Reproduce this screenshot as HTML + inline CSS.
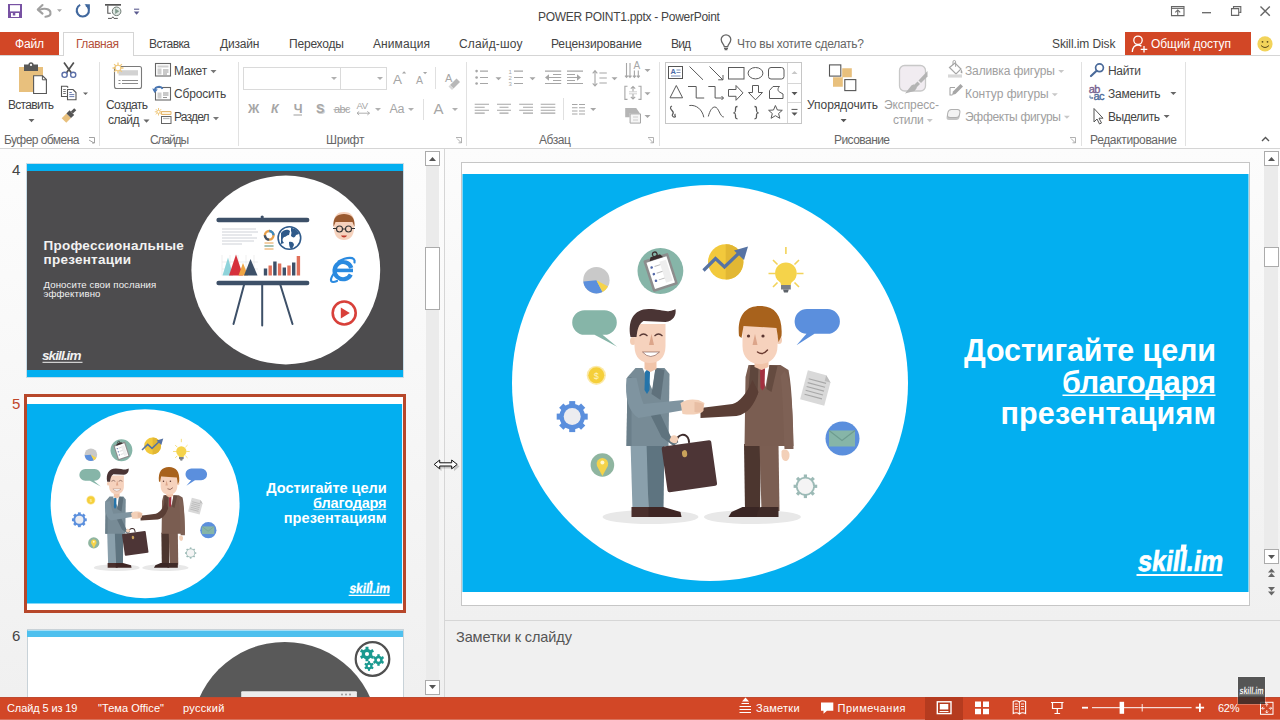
<!DOCTYPE html>
<html><head><meta charset="utf-8">
<style>
*{margin:0;padding:0;box-sizing:border-box}
html,body{width:1280px;height:720px;overflow:hidden;background:#fff;font-family:"Liberation Sans",sans-serif;color:#444}
.a{position:absolute}
.t{position:absolute;white-space:nowrap;line-height:1}
svg{position:absolute;overflow:visible}
.tab{position:absolute;top:37px;font-size:12px;color:#444;white-space:nowrap;line-height:14px;letter-spacing:-0.25px}
.rl{position:absolute;font-size:12px;color:#444;white-space:nowrap;line-height:14px;letter-spacing:-0.1px}
.gl{position:absolute;top:133px;font-size:12px;color:#666;white-space:nowrap;line-height:14px;letter-spacing:-0.1px}
.sep{position:absolute;top:62px;width:1px;height:84px;background:#e1e1e1}
.dd{position:absolute;width:0;height:0;border-left:3px solid transparent;border-right:3px solid transparent;border-top:3px solid #777}
</style></head><body>

<!-- ===== TITLE BAR ===== -->
<svg style="left:0;top:0" width="160" height="30">
 <path d="M8 4h14v14H8z" fill="#7852a3"/>
 <path d="M10 5.2h10v6.2H10z" fill="#fff"/>
 <path d="M11 13h8v4h-8z" fill="#fff"/>
 <path d="M12.8 13h2.5v2.5h-2.5z" fill="#7852a3"/>
 <path d="M40 9.6 C44 8 50 8.5 50.5 12.5 C51 15.5 48.5 16.5 45.5 16.8" fill="none" stroke="#a0a0a0" stroke-width="2.1" stroke-linecap="round"/>
 <path d="M42.5 5 L37.8 9.6 L42.5 13.6" fill="none" stroke="#a0a0a0" stroke-width="2.1" stroke-linecap="round" stroke-linejoin="round"/>
 <path d="M57 9.3h5l-2.5 2.6z" fill="#a8a8a8"/>
 <path d="M86 5.2 A6.1 6.1 0 1 1 80.2 4.9" fill="none" stroke="#41689e" stroke-width="2.1"/>
 <path d="M84.5 4.3h5.4v5.4z" fill="#41689e"/>
 <path d="M105 4h16v1.7h-16z" fill="#555"/>
 <path d="M107.8 5.6v7.6h3" fill="none" stroke="#555" stroke-width="1.1"/>
 <circle cx="116.6" cy="11.3" r="4.3" fill="#dfe7e3" stroke="#6e7a74" stroke-width="1"/>
 <path d="M115.2 8.6v5.4l4-2.7z" fill="#7f9a8c"/>
 <path d="M108 18.4h3.6l1.2-1.6 1.2 1.6h3.8" fill="none" stroke="#555" stroke-width="1"/>
 <path d="M134 9.2h5.2" stroke="#5b5b8f" stroke-width="1.1"/>
 <path d="M133.8 11.4h5.6l-2.8 3.3z" fill="#5b5b8f"/>
</svg>
<svg style="left:1160px;top:0" width="120" height="30">
 <path d="M11.5 6.6h12.5v9H11.5z" fill="none" stroke="#666" stroke-width="1.1"/>
 <path d="M11.5 8.4h12.5" stroke="#666" stroke-width="1"/>
 <path d="M17.75 15.5v-5.6M15.3 12.3l2.45-2.4 2.45 2.4" fill="none" stroke="#666" stroke-width="1.1"/>
 <path d="M42 12.7h9" stroke="#666" stroke-width="1.3"/>
 <path d="M73.5 8V6.6h7.3v5.8h-1.6" fill="none" stroke="#666" stroke-width="1.1"/>
 <path d="M71.5 8.6h7.2v6.8h-7.2z" fill="none" stroke="#666" stroke-width="1.1"/>
 <path d="M100.5 6.5l9.3 9.3M109.8 6.5l-9.3 9.3" stroke="#666" stroke-width="1.4"/>
</svg>
<div class="t" style="left:538px;top:11px;font-size:12px;color:#444;letter-spacing:-0.28px">POWER POINT1.pptx - PowerPoint</div>

<!-- ===== TABS ===== -->
<div class="a" style="left:0;top:55px;width:1280px;height:1px;background:#d5d5d5"></div>
<div class="a" style="left:0;top:32px;width:59px;height:23px;background:#d24726"></div>
<div class="tab" style="left:15px;color:#fff;letter-spacing:-0.17px">Файл</div>
<div class="a" style="left:63px;top:32px;width:71px;height:24px;background:#fff;border:1px solid #d5d5d5;border-bottom:none"></div>
<div class="tab" style="left:76px;color:#b4503a;letter-spacing:-0.45px">Главная</div>
<div class="tab" style="left:149px;letter-spacing:-0.60px">Вставка</div>
<div class="tab" style="left:220px;letter-spacing:-0.17px">Дизайн</div>
<div class="tab" style="left:289px;letter-spacing:-0.19px">Переходы</div>
<div class="tab" style="left:373px;letter-spacing:0.09px">Анимация</div>
<div class="tab" style="left:459px;letter-spacing:0.16px">Слайд-шоу</div>
<div class="tab" style="left:551px;letter-spacing:-0.13px">Рецензирование</div>
<div class="tab" style="left:671px;letter-spacing:-0.86px">Вид</div>
<div class="tab" style="left:737px;color:#666;letter-spacing:-0.27px">Что вы хотите сделать?</div>
<svg style="left:715px;top:30px" width="30" height="26">
 <path d="M9.3 16.6 C8.8 14 6.2 12.6 6.2 9.6 A4.8 4.8 0 0 1 15.8 9.6 C15.8 12.6 13.2 14 12.7 16.6z" fill="none" stroke="#666" stroke-width="1.3"/>
 <path d="M9 18.3h4M9.6 19.7h2.8" stroke="#666" stroke-width="1.2"/>
</svg>
<div class="tab" style="left:1052px;letter-spacing:-0.10px">Skill.im Disk</div>
<div class="a" style="left:1125px;top:32px;width:126px;height:23px;background:#d24726"></div>
<div class="tab" style="left:1151px;color:#fff;letter-spacing:-0.06px">Общий доступ</div>
<svg style="left:1125px;top:32px" width="155" height="23">
 <circle cx="13" cy="8.3" r="4.2" fill="none" stroke="#fff" stroke-width="1.3"/>
 <path d="M7.3 20 C7.6 15.5 10 13 13 13 C14.5 13 15.6 13.5 16.4 14.3" fill="none" stroke="#fff" stroke-width="1.3"/>
 <path d="M19 14v6.6M15.7 17.3h6.6" stroke="#fff" stroke-width="1.3"/>
 <circle cx="140" cy="11.9" r="7.6" fill="#f2d35a"/>
 <circle cx="137.5" cy="9.8" r="0.9" fill="#5a4a1a"/>
 <circle cx="142.5" cy="9.8" r="0.9" fill="#5a4a1a"/>
 <path d="M136 13.5 Q140 17.5 144 13.5" fill="none" stroke="#5a4a1a" stroke-width="1"/>
</svg>

<!-- ===== RIBBON ===== -->
<div class="a" style="left:0;top:148px;width:1280px;height:1px;background:#d5d5d5"></div>
<div class="sep" style="left:99px"></div>
<div class="sep" style="left:238px"></div>
<div class="sep" style="left:466px"></div>
<div class="sep" style="left:659px"></div>
<div class="sep" style="left:1081px"></div>
<div class="sep" style="left:1185px"></div>
<!-- clipboard group -->
<svg style="left:0;top:56px" width="100" height="92">
 <path d="M19 11h24v25H19z" fill="#e8c07d"/>
 <path d="M24 8.5h14v6.5H24z" fill="#575757"/>
 <circle cx="31" cy="8.8" r="2.6" fill="#575757"/>
 <circle cx="31" cy="8.9" r="1.1" fill="#fff"/>
 <path d="M33.6 19.8h9l3.8 3.8v13.9H33.6z" fill="#fff" stroke="#575757" stroke-width="1.1"/>
 <path d="M42.4 19.8v4h4" fill="none" stroke="#575757" stroke-width="1"/>
 <path d="M28.5 63h6l-3 3.2z" fill="#666"/>
 <path d="M64 6.5l8.5 12M73.8 6.5l-8.5 12" stroke="#505050" stroke-width="1.7"/>
 <circle cx="64.6" cy="18.8" r="2.6" fill="#fff" stroke="#5b6fa8" stroke-width="1.4"/>
 <circle cx="73.2" cy="18.8" r="2.6" fill="#fff" stroke="#5b6fa8" stroke-width="1.4"/>
 <path d="M67.5 40.5h-6v-10.2h5.5l1.2 1.2" fill="#fff" stroke="#555" stroke-width="1.1"/>
 <path d="M63.2 33.5h2.6M63.2 35.5h2.6M63.2 37.5h2.6" stroke="#666" stroke-width="0.9"/>
 <path d="M67.5 33.5h5.5l3 3v7.3h-8.5z" fill="#fff" stroke="#555" stroke-width="1.1"/>
 <path d="M69.3 36.5h2.5M69.3 38.6h5M69.3 40.6h5" stroke="#5b6fa8" stroke-width="0.9"/>
 <path d="M83 36.4h5l-2.5 2.6z" fill="#666"/>
 <g transform="translate(70 58.5) rotate(-45) scale(0.9)">
  <rect x="-9.5" y="-3.6" width="7.5" height="7.2" fill="#e8c07d"/>
  <rect x="-2" y="-3.6" width="5" height="7.2" fill="#555"/>
  <rect x="3" y="-1.6" width="5.2" height="3.2" fill="#555"/>
 </g>
 <path d="M89 81.5h5.5v5.5M89 84l5 3M92 87h2.5" fill="none" stroke="#999" stroke-width="0.9"/>
</svg>
<div class="rl" style="left:8px;top:98px;letter-spacing:-0.70px">Вставить</div>
<div class="gl" style="left:4px;letter-spacing:-0.56px">Буфер обмена</div>
<!-- slides group -->
<svg style="left:100px;top:56px" width="140" height="92">
 <rect x="14.5" y="10.5" width="27" height="22" rx="2" fill="#fff" stroke="#7a7a7a" stroke-width="1.1"/>
 <path d="M18.6 14.2h19.4v5.3H18.6z" fill="#d2d2d2"/>
 <path d="M18.5 24.5h2M22 24.5h16M18.5 27.5h2M22 27.5h16" stroke="#8a8a8a" stroke-width="1"/>
 <g stroke="#f0c97e" stroke-width="1.3"><path d="M18 6.5v11M12.5 12h11M14.1 8.1l7.8 7.8M21.9 8.1l-7.8 7.8"/></g>
 <circle cx="18" cy="12" r="2.8" fill="#fff" stroke="#f0c97e" stroke-width="1.1"/>
 <path d="M43.5 63.5h6l-3 3.2z" fill="#666"/>
 <rect x="55.5" y="7.5" width="15" height="12.5" fill="#fff" stroke="#666" stroke-width="1.1"/>
 <path d="M57.5 9.5h11v2h-11z" fill="#cfcfcf"/>
 <path d="M57.5 12.5h4v6h-4z" fill="#cfcfcf"/>
 <path d="M63 14h5.5M63 16h5.5M63 18h4" stroke="#888" stroke-width="0.9"/>
 <rect x="55.5" y="31.5" width="15" height="12.5" fill="#fff" stroke="#666" stroke-width="1.1"/>
 <path d="M57.5 36.5h4v6h-4z" fill="#cfcfcf"/>
 <path d="M63 37h5.5M63 39h5.5M63 41.5h4" stroke="#888" stroke-width="0.9"/>
 <path d="M54.5 35 C55 30 61 29.5 62.5 33" fill="none" stroke="#4a78b6" stroke-width="1.8"/>
 <path d="M52.2 32.5l2.4 4.4 3.2-3.5z" fill="#4a78b6"/>
 <g stroke="#f0c97e" stroke-width="1"><path d="M58.5 52v7.5M54.8 55.8h7.5M55.9 53.2l5.2 5.2M61.1 53.2l-5.2 5.2"/></g>
 <circle cx="58.5" cy="55.8" r="1.6" fill="#fff" stroke="#f0c97e"/>
 <path d="M61.5 55.5h9.5v3H61.5z" fill="#fdf3e0" stroke="#e6b870" stroke-width="1"/>
 <rect x="61.5" y="60.5" width="9.5" height="7" fill="#fff" stroke="#666" stroke-width="1"/>
 <path d="M63 62.5h6.5" stroke="#bbb" stroke-width="1.3"/>
 <path d="M110.5 14h6l-3 3.2z" fill="#777"/>
 <path d="M113 61h6l-3 3.2z" fill="#777"/>
</svg>
<div class="rl" style="left:106px;top:98px;letter-spacing:-0.60px">Создать</div>
<div class="rl" style="left:108px;top:113px;letter-spacing:-0.50px">слайд</div>
<div class="rl" style="left:174px;top:64px;letter-spacing:-0.19px">Макет</div>
<div class="rl" style="left:174px;top:87px;letter-spacing:-0.16px">Сбросить</div>
<div class="rl" style="left:174px;top:110px;letter-spacing:-0.81px">Раздел</div>
<div class="gl" style="left:150px;letter-spacing:-1.13px">Слайды</div>
<div class="gl" style="left:326px;letter-spacing:-0.27px">Шрифт</div>
<!-- font group -->
<div class="a" style="left:243px;top:67px;width:144px;height:23px;border:1px solid #dadada;background:#fff"></div>
<div class="a" style="left:340px;top:67px;width:1px;height:23px;background:#dadada"></div>
<div class="dd" style="left:331px;top:77px;border-top-color:#b0b0b0"></div>
<div class="dd" style="left:377px;top:77px;border-top-color:#b0b0b0"></div>
<div class="a" style="left:435px;top:67px;width:1px;height:22px;background:#e0e0e0"></div>
<div class="a" style="left:423px;top:99px;width:1px;height:21px;background:#e0e0e0"></div>
<svg style="left:240px;top:62px" width="230" height="62">
 <g fill="#a6a6a6">
  <text x="153" y="22" font-family="Liberation Sans" font-size="13.5">A</text>
  <path d="M162 11.5h4.2l-2.1-2.3z"/>
  <text x="176" y="22" font-family="Liberation Sans" font-size="10.5">A</text>
  <path d="M183 10h4.2l-2.1 2.3z"/>
  <text x="8" y="51.2" font-family="Liberation Sans" font-size="12.5" font-weight="700">Ж</text>
  <text x="31" y="51.2" font-family="Liberation Sans" font-size="12.5" font-weight="700" font-style="italic">К</text>
  <text x="53.8" y="51.2" font-family="Liberation Sans" font-size="12.5" font-weight="700">Ч</text>
  <text x="77" y="52.2" font-family="Liberation Sans" font-size="12.5" font-weight="700" fill="#d0d0d0">S</text>
  <text x="76" y="51.2" font-family="Liberation Sans" font-size="12.5" font-weight="700">S</text>
  <text x="94" y="51.2" font-family="Liberation Sans" font-size="11" letter-spacing="-0.6">abc</text>
  <text x="116.5" y="46.5" font-family="Liberation Sans" font-size="9.5" letter-spacing="-0.4">AV</text>
  <text x="149.5" y="51.2" font-family="Liberation Sans" font-size="12.5" letter-spacing="-0.3">Aa</text>
  <text x="193.6" y="52" font-family="Liberation Sans" font-size="15">A</text>
 </g>
 <path d="M53.5 53h8.5" stroke="#a6a6a6" stroke-width="1.1"/>
 <path d="M93.5 47.6h16" stroke="#a6a6a6" stroke-width="0.9"/>
 <path d="M117 51.2h12.5M117 51.2l2.2-1.8M117 51.2l2.2 1.8M129.5 51.2l-2.2-1.8M129.5 51.2l-2.2 1.8" stroke="#a6a6a6" stroke-width="0.9" fill="none"/>
 <g transform="translate(205,9)">
  <text x="0" y="11" font-family="Liberation Sans" font-size="11" fill="#a6a6a6">A</text>
  <path d="M5 14 L11.5 7.5 L15 11 L8.5 17.5z" fill="#b8b8b8"/>
  <path d="M8.5 17.5 L5 14 L3.5 15.5 L7 19z" fill="#d8d8d8"/>
 </g>
</svg>
<div class="dd" style="left:375px;top:108px;border-top-color:#b0b0b0"></div>
<div class="dd" style="left:408px;top:108px;border-top-color:#b0b0b0"></div>
<div class="dd" style="left:452px;top:108px;border-top-color:#b0b0b0"></div>
<div class="gl" style="left:539px;letter-spacing:-0.42px">Абзац</div>
<!-- paragraph group -->
<div class="a" style="left:563px;top:98px;width:1px;height:22px;background:#e0e0e0"></div>
<svg style="left:468px;top:60px" width="192" height="70">
 <g fill="#a6a6a6">
  <circle cx="8.6" cy="11.1" r="1.3"/><circle cx="8.6" cy="17.5" r="1.3"/><circle cx="8.6" cy="23.5" r="1.3"/>
  <text x="40.5" y="14" font-family="Liberation Sans" font-size="6">1</text>
  <text x="40.5" y="20" font-family="Liberation Sans" font-size="6">2</text>
  <text x="40.5" y="26" font-family="Liberation Sans" font-size="6">3</text>
  <path d="M27.5 17.2h6l-3 3z"/><path d="M61.5 17.2h6l-3 3z"/><path d="M143.5 17.2h6l-3 3z"/>
  <path d="M176.5 9h6l-3 3z"/><path d="M176.5 32.2h6l-3 3z"/><path d="M176.5 55h6l-3 3z"/>
  <path d="M122.2 48h6l-3 3z"/>
  <path d="M77 17.5l4-3.2v6.4z"/><path d="M113 17.5l-4-3.2v6.4z"/>
  <path d="M157 74" />
 </g>
 <g stroke="#a6a6a6" stroke-width="1.1" fill="none">
  <path d="M12 11.1h8M12 17.5h8M12 23.5h8"/>
  <path d="M46 11.1h9M46 17.5h9M46 23.5h9"/>
  <path d="M77 11.1h16.2M85 14.5h8.2M81 17.5h12.2M85 20.5h8.2M77 23.5h16.2"/>
  <path d="M99 11.1h16M99 14.5h8M99 17.5h10M99 20.5h8M99 23.5h16"/>
  <path d="M127 11.5v14M124.7 13.3l2.3-2.6 2.3 2.6M124.7 23.4l2.3 2.6 2.3-2.6"/>
  <path d="M131.4 13h7.4M131.4 18h7.4M131.4 23h7.4"/>
  <path d="M158.5 3v14M162 3v14M166.4 10.5v6.5M170.3 10.5v6.5M157 15.6l1.5 1.8 1.5-1.8M160.5 15.6l1.5 1.8 1.5-1.8M164.9 15.6l1.5 1.8 1.5-1.8M168.8 15.6l1.5 1.8 1.5-1.8"/>
  <path d="M159.5 26.2h-2.6v13.2h2.6M170.4 26.2h2.6v13.2h-2.6"/>
  <path d="M165 26.5v5M162.8 28.7l2.2-2.2 2.2 2.2M165 34v5M162.8 36.8l2.2 2.2 2.2-2.2"/>
  <path d="M6.7 44.2h14.3M6.7 47.2h10M6.7 50.2h14.3M6.7 53.1h10"/>
  <path d="M29 44.2h14M31.5 47.2h9M29 50.2h14M31.5 53.1h9"/>
  <path d="M51.2 44.2h13.8M55 47.2h10M51.2 50.2h13.8M55 53.1h10"/>
  <path d="M72.7 44.2h14.6M72.7 47.2h14.6M72.7 50.2h14.6M72.7 53.1h14.6"/>
  <path d="M104 44.5h5.5M111 44.5h6M104 47.8h5.5M111 47.8h6M104 51h5.5M111 51h6M104 54h5.5M111 54h6"/>
 </g>
 <text x="165.6" y="9.4" font-family="Liberation Sans" font-size="10" fill="#a6a6a6">A</text>
 <path d="M157.2 48h11l3.8 5.4h-10.4v3.9h-4.4z" fill="#b5b5b5"/>
 <path d="M162.1 53.9h10.4v9.2h-10.4z" fill="#f6f6f6" stroke="#a6a6a6" stroke-width="1"/>
 <path d="M165 57h5M165 60h5M161 31.8h8M161 33.8h8" stroke="#c4c4c4" stroke-width="0.8"/>
</svg>
<div class="gl" style="left:834px;letter-spacing:-0.55px">Рисование</div>
<!-- drawing group -->
<div class="a" style="left:665px;top:62px;width:137px;height:62px;border:1px solid #c6c6c6;background:#fff"></div>
<div class="a" style="left:787px;top:63px;width:1px;height:60px;background:#d6d6d6"></div>
<div class="a" style="left:788px;top:83px;width:13px;height:1px;background:#d6d6d6"></div>
<div class="a" style="left:788px;top:102px;width:13px;height:1px;background:#d6d6d6"></div>
<svg style="left:660px;top:58px" width="200" height="70">
 <g fill="none" stroke="#5a5a5a" stroke-width="1">
  <rect x="8.5" y="8.5" width="14" height="12" stroke="#555"/>
  <path d="M16.5 12h4M16.5 14.5h4M11 18h9.5" stroke="#7a8fb8"/>
  <path d="M29.5 8.5l13.5 13.3"/>
  <path d="M49.5 8.5l13.3 13.3M63 17v4.8h-4.8"/>
  <rect x="68.5" y="9.5" width="15.5" height="11.5"/>
  <ellipse cx="95.5" cy="15.2" rx="7.4" ry="5.7"/>
  <rect x="108.5" y="9.5" width="15.5" height="11.5" rx="2.5"/>
  <path d="M16.3 27.5l-6.3 12.3h12.6z"/>
  <path d="M28 28.5h8.2v11.5h8"/>
  <path d="M48.3 28.5h6.8v11.5h8.3M61.5 38l2 2-2 2"/>
  <path d="M68.5 31.5h7.5v-4l7 7.4-7 7.4v-4h-7.5z"/>
  <path d="M92.5 27.5h6v7h4l-7 7.3-7-7.3h4z"/>
  <path d="M109.5 32.5l3.5-4h6.5c-2 1.5-2 4.5 0 5.5l3.5 2v4.5h-13.5z"/>
  <path d="M12 48c-2.5 1-1.5 3 0 4.5s1.5 3 .5 4 1 3 2.5 2.5-1.5-2 .5-3" stroke-width="1.2"/>
  <path d="M29.3 47.5c7-1 13 4 14.5 11.8"/>
  <path d="M48.3 58.5c1.5-6 4-9.5 6.5-9.5 4 0 5 10 9 10"/>
  <path d="M77.5 48.5c-2 0-2 1-2 3.5s-.5 2.5-2 2.8c1.5.3 2 .5 2 2.8s0 3.2 2 3.2" stroke-width="1.3"/>
  <path d="M94.5 48.5c2 0 2 1 2 3.5s.5 2.5 2 2.8c-1.5.3-2 .5-2 2.8s0 3.2-2 3.2" stroke-width="1.3"/>
  <path d="M115.4 47.5l2 4.5 4.9.3-3.7 3.2 1.2 4.8-4.4-2.6-4.3 2.6 1.2-4.8-3.7-3.2 4.9-.3z"/>
 </g>
 <text x="10.5" y="16" font-family="Liberation Sans" font-size="7.5" font-weight="700" fill="#4a6aa8">A</text>
 <path d="M131.5 16h6l-3-3z" fill="#c8c8c8"/>
 <path d="M131.5 34h6l-3 3.2z" fill="#555"/>
 <path d="M131.5 51.4h6" stroke="#555" stroke-width="1"/>
 <path d="M131.5 54.5h6l-3 3.2z" fill="#555"/>
 <!-- arrange -->
 <path d="M182.2 10.3h9.6v9h-9.6zM173 19.3h9.8v9.4H173z" fill="#e8c07d"/>
 <rect x="169.5" y="6.9" width="11.3" height="11.2" fill="#fff" stroke="#555" stroke-width="1.1"/>
 <rect x="184.8" y="21.6" width="11" height="11" fill="#fff" stroke="#555" stroke-width="1.1"/>
 <path d="M180.6 61h6l-3 3.2z" fill="#555"/>
</svg>
<div class="rl" style="left:807px;top:98px;letter-spacing:-0.04px">Упорядочить</div>
<svg style="left:880px;top:58px" width="200" height="70">
 <rect x="19.5" y="7.5" width="26" height="25.5" rx="5" fill="#f1ecf1" stroke="#c8c8c8" stroke-width="1.3"/>
 <path d="M25 35.5l6-7.5c1.5-2 4-2 5.5-.5l.5.5c0 2-1 3.5-2.5 5z" fill="#b4b4b4"/>
 <path d="M34.5 26.5l3-3 2.5 2.5-3 3z" fill="#b4b4b4"/>
 <path d="M38.5 22.5l9-9.5v5.5l-6.5 6.5z" fill="#b4b4b4"/>
 <path d="M46.8 61h6l-3 3.2z" fill="#c8c8c8"/>
 <!-- fill -->
 <path d="M69.5 9.5l5.5-4.5 6 6-5 5z" fill="#fff" stroke="#a6a6a6" stroke-width="1.2"/>
 <path d="M73 7v-3.2a1.3 1.3 0 0 1 2.6 0v5" fill="none" stroke="#a6a6a6" stroke-width="1"/>
 <path d="M81 11.5c1.2.8 1.8 2.5 1.2 4l-1.6-.8z" fill="#a6a6a6"/>
 <path d="M68 16.4h14v3.2H68z" fill="#d8d8d8"/>
 <!-- outline -->
 <path d="M70 29.5v7.5h2.5M70 29.5h5" fill="none" stroke="#a6a6a6" stroke-width="1.1"/>
 <path d="M72 37l1-3.5 7.5-7.5 2.5 2.5-7.5 7.5z" fill="#a6a6a6"/>
 <!-- effects -->
 <rect x="67" y="54" width="13" height="8" rx="3" fill="#c4c4c4" transform="skewX(-10) translate(10 0)"/>
 <rect x="67.5" y="51.5" width="12" height="8" rx="3" fill="#f3f3f3" stroke="#b0b0b0" stroke-width="1" transform="skewX(-10) translate(10 0)"/>
 <path d="M178.2 12h6l-3 3z" fill="#c8c8c8"/>
 <path d="M171.8 35.3h6l-3 3z" fill="#c8c8c8"/>
 <path d="M183.9 57.8h6l-3 3z" fill="#c8c8c8"/>
</svg>
<div class="rl" style="left:884px;top:98px;color:#a0a0a0;letter-spacing:-0.11px">Экспресс-</div>
<div class="rl" style="left:893px;top:113px;color:#a0a0a0;letter-spacing:-0.33px">стили</div>
<div class="rl" style="left:965px;top:64px;color:#a0a0a0;letter-spacing:-0.13px">Заливка фигуры</div>
<div class="rl" style="left:965px;top:87px;color:#a0a0a0;letter-spacing:-0.02px">Контур фигуры</div>
<div class="rl" style="left:965px;top:110px;color:#a0a0a0;letter-spacing:-0.31px">Эффекты фигуры</div>
<!-- editing group -->
<svg style="left:1080px;top:58px" width="200" height="90">
 <circle cx="19.5" cy="9.8" r="3.9" fill="none" stroke="#4a6a9a" stroke-width="1.7"/>
 <path d="M16.6 12.7l-5.6 5.3" stroke="#4a6a9a" stroke-width="2.2" stroke-linecap="round"/>
 <text x="8.8" y="34.6" font-family="Liberation Sans" font-size="11" fill="#76608e" stroke="#76608e" stroke-width="0.35" letter-spacing="-0.6">ab</text>
 <text x="13.6" y="41.9" font-family="Liberation Sans" font-size="11" fill="#4a6a9a" stroke="#4a6a9a" stroke-width="0.35" letter-spacing="-0.6">ac</text>
 <path d="M10 37.5v2.5h2.5M11.6 38.9l1.1 1.1-1.1 1.1" fill="none" stroke="#4a6a9a" stroke-width="0.9"/>
 <path d="M14 50.5v13.5l3-3 2.5 5 2-1-2.5-4.8h4z" fill="#fff" stroke="#555" stroke-width="1"/>
 <path d="M90.4 34h6l-3 3z" fill="#666"/>
 <path d="M83.6 57h6l-3 3z" fill="#666"/>
 <path d="M182 83l3.5-3.5 3.5 3.5" fill="none" stroke="#555" stroke-width="1.4"/>
</svg>
<div class="rl" style="left:1108px;top:64px;letter-spacing:-0.31px">Найти</div>
<div class="rl" style="left:1108px;top:87px;letter-spacing:-0.21px">Заменить</div>
<div class="rl" style="left:1108px;top:110px;letter-spacing:-0.48px">Выделить</div>
<div class="gl" style="left:1090px;letter-spacing:-0.34px">Редактирование</div>

<svg style="left:0;top:130px" width="1280" height="16">
 <g fill="none" stroke="#a8a8a8" stroke-width="0.9">
  <path d="M456 7.5h5.5v5.5M457 8.5l4.2 4.2M458.5 12.8h3"/>
  <path d="M648 7.5h5.5v5.5M649 8.5l4.2 4.2M650.5 12.8h3"/>
  <path d="M1070 7.5h5.5v5.5M1071 8.5l4.2 4.2M1072.5 12.8h3"/>
 </g>
</svg>
<!-- ===== PANES ===== -->
<div class="a" style="left:0;top:149px;width:444px;height:548px;background:linear-gradient(#fdfdfd,#f0f0f0)"></div>
<div class="a" style="left:444px;top:149px;width:1px;height:548px;background:#d6d6d6"></div>
<div class="a" style="left:445px;top:149px;width:835px;height:471px;background:linear-gradient(#fcfcfc,#f0f0f0)"></div>
<div class="a" style="left:445px;top:620px;width:835px;height:1px;background:#d6d6d6"></div>
<div class="a" style="left:445px;top:621px;width:835px;height:76px;background:#f0f0f0"></div>
<div class="t" style="left:456px;top:629.6px;font-size:14.5px;color:#555;letter-spacing:-0.10px">Заметки к слайду</div>

<!-- main slide -->
<div class="a" style="left:461px;top:162px;width:789px;height:444px;background:#fff;border:1px solid #c6c6c6"></div>
<svg style="left:0;top:0" width="0" height="0"><defs><g id="s5">
 <rect x="0" y="0" width="786" height="418" fill="#03aff0"/>
 <circle cx="247.5" cy="209" r="198" fill="#fff"/>
 <!-- pie -->
 <circle cx="133.9" cy="106.2" r="13.2" fill="#c9c9c9"/>
 <path d="M133.9 106.2 L120.8 107.5 A13.2 13.2 0 0 0 140 117.9z" fill="#5b8fdd"/>
 <path d="M133.9 106.2 L140 117.9 A13.2 13.2 0 0 0 145.5 112.5z" fill="#f5d34a"/>
 <!-- clipboard circle -->
 <circle cx="197.9" cy="97" r="22.9" fill="#86b5a8"/>
 <g transform="rotate(-18 197.9 98)">
  <rect x="185" y="82" width="26" height="33" rx="1.5" fill="#8d8d8d"/>
  <rect x="187.5" y="85" width="21" height="27.5" fill="#fff"/>
  <path d="M198 82 l0 0" />
  <path d="M191 84.5 h14 l-2 -3.5 h-10z" fill="#3c2e2e"/>
  <circle cx="198" cy="79.5" r="2.3" fill="none" stroke="#3c2e2e" stroke-width="1.3"/>
  <circle cx="191" cy="91" r="1.3" fill="#5368a8"/><circle cx="191" cy="98" r="1.3" fill="#5368a8"/><circle cx="191" cy="105" r="1.3" fill="#5368a8"/>
  <path d="M194 91h11M194 98h11M194 105h11" stroke="#bbb" stroke-width="1"/>
  <rect x="200" y="88" width="7" height="22" fill="#eee"/>
 </g>
 <!-- chart circle -->
 <circle cx="263.2" cy="87.9" r="17.7" fill="#f2c93c"/>
 <path d="M263.2 70.2 A17.7 17.7 0 0 1 263.2 105.6z" fill="#e2b733"/>
 <path d="M241 96.5 L253 84.5 L262 93 L276 79.5" fill="none" stroke="#5773a3" stroke-width="3.2" stroke-linejoin="miter"/>
 <path d="M271.5 76.5 L285.5 72.5 L281.5 86z" fill="#5773a3"/>
 <!-- bulb -->
 <g stroke="#f2d35a" stroke-width="1.6">
  <path d="M323.4 73v7M306 99.5h7M334 99.5h7M310.5 86l4.5 4.5M336.5 86l-4.5 4.5M310.5 113l4.5-4.5M336.5 113l-4.5-4.5" />
 </g>
 <circle cx="323.4" cy="99.2" r="10.8" fill="#f5d34a"/>
 <path d="M317 104 h12.8 l-1.5 7 h-9.8z" fill="#f5d34a"/>
 <path d="M318.5 111h9.8v4.5h-9.8z" fill="#7a7f87"/>
 <path d="M320.5 115.5h5.8l-1 3h-3.8z" fill="#5d6269"/>
 <!-- speech left -->
 <path d="M122 136.2 H142 A12.3 12.3 0 0 1 142 160.8 H140 L154.6 172.8 L132 160.8 H122 A12.3 12.3 0 0 1 122 136.2z" fill="#86b5a8"/>
 <!-- speech right -->
 <path d="M345 135 H365 A12.4 12.4 0 0 1 365 159.8 H352 L334 171.2 L344 159.8 A12.4 12.4 0 0 1 345 135z" fill="#5b8fdd"/>
 <!-- coin -->
 <circle cx="133.8" cy="201.3" r="9.6" fill="#fbe9a8"/>
 <circle cx="133.8" cy="201.3" r="8" fill="#f5cf3a"/>
 <text x="133.8" y="205" font-family="Liberation Sans" font-size="9" fill="#fff3c0" text-anchor="middle">$</text>
 <!-- document -->
 <g transform="rotate(15 353.7 214.2)">
  <path d="M341 199 h19 l6 6 v24 h-25z" fill="#d9d9d9"/>
  <path d="M360 199 v6 h6z" fill="#bdbdbd"/>
  <path d="M344 207h18M344 211h18M344 215h18M344 219h18M344 223h18" stroke="#a8a8a8" stroke-width="1.1"/>
 </g>
 <!-- gear blue -->
 <g transform="translate(109.7 242.6)" fill="#5b8fdd">
  <circle r="12.8"/>
  <g id="gt"><rect x="-3" y="-15.5" width="6" height="5"/></g>
  <use href="#gt" transform="rotate(45)"/><use href="#gt" transform="rotate(90)"/><use href="#gt" transform="rotate(135)"/>
  <use href="#gt" transform="rotate(180)"/><use href="#gt" transform="rotate(225)"/><use href="#gt" transform="rotate(270)"/><use href="#gt" transform="rotate(315)"/>
  <circle r="8.5" fill="#ececf0"/>
 </g>
 <!-- pin circle -->
 <circle cx="139.9" cy="291" r="11.8" fill="#8fb5a0"/>
 <path d="M139.9 302 L134.5 292 A5.8 5.8 0 1 1 145.3 292z" fill="#f5d34a"/>
 <circle cx="139.9" cy="288.5" r="2" fill="#fff7cf"/>
 <!-- envelope circle -->
 <circle cx="380" cy="264.5" r="17" fill="#5b8fdd"/>
 <path d="M366.5 256.5 h26 v16 h-26z" fill="#86b5a8"/>
 <path d="M366.5 256.5 L379.5 266.5 L392.5 256.5" fill="none" stroke="#6e9c90" stroke-width="1.2"/>
 <!-- gear teal -->
 <g transform="translate(342.9 312.3)" fill="#9cbab6">
  <circle r="9.6"/>
  <g id="gt2"><rect x="-1.6" y="-11.8" width="3.2" height="3.5"/></g>
  <use href="#gt2" transform="rotate(45)"/><use href="#gt2" transform="rotate(90)"/><use href="#gt2" transform="rotate(135)"/>
  <use href="#gt2" transform="rotate(180)"/><use href="#gt2" transform="rotate(225)"/><use href="#gt2" transform="rotate(270)"/><use href="#gt2" transform="rotate(315)"/>
  <circle r="7.8" fill="#f4f4f4"/>
 </g>
 <!-- shadows -->
 <ellipse cx="188" cy="343" rx="48" ry="7" fill="#e8e8e8"/>
 <ellipse cx="290" cy="343" rx="48.5" ry="7" fill="#e8e8e8"/>
 <!-- LEFT MAN -->
 <!-- legs -->
 <path d="M168 268 h18 v68 h-16z" fill="#8aa0ac"/>
 <path d="M184 268 h18 l-1 68 h-15z" fill="#5e7480"/>
 <path d="M169 333 h18 l3 4 v6 h-21z" fill="#4a2f2c"/>
 <path d="M186 333 h15 l17 5 l1 5 h-33z" fill="#3f2624"/>
 <!-- body -->
 <path d="M173 194 h29 l5 6 l-1 72 h-42 l1-69 z" fill="#778b96"/>
 <path d="M180 194 h13 l-3 22z" fill="#fff"/>
 <path d="M185 195 l2.5 3 l-0.5 18 l-2.5 4 l-2.5-4 l0.5-18z" fill="#2474aa"/>
 <path d="M193 194 l9 2 l-4 30 l-9-6z" fill="#5f717c"/>
 <path d="M165 203 l4 0 l0 69 h-5z" fill="#6b7f8a"/>
 <!-- lower arm to briefcase -->
 <path d="M196 236 l12 26 l8 6 l-5 4 l-12-9 l-11-22z" fill="#5f737e"/>
 <!-- briefcase -->
 <g transform="rotate(-8 228 293)">
  <path d="M218 266 a6 6 0 0 1 12 0 v3" fill="none" stroke="#3e2c2c" stroke-width="2"/>
  <rect x="202" y="269" width="50" height="46" rx="2" fill="#4d3536"/>
  <ellipse cx="224" cy="279" rx="2.6" ry="3.6" fill="#c9a25a"/>
 </g>
 <path d="M209 262 c3-2 6 0 7 3 l-2 4 c-3 1-6-1-7-3z" fill="#f3d0b8"/>
 <!-- upper arm to handshake -->
 <path d="M164 204 c-2 20 2 34 12 40 l46 -8 l-1 -10 l-40 4 c-4-10-5-18-7-26z" fill="#7f94a0"/>
 <!-- neck & head -->
 <path d="M182 184 h12 v11 l-6 3 l-6-3z" fill="#f1c4a9"/>
 <ellipse cx="170.5" cy="167" rx="3" ry="4" fill="#f3cdb5"/>
 <path d="M172 150 h31 v22 c0 12 -7 17 -15.5 17 s-15.5-5-15.5-17z" fill="#f6d2bd"/>
 <path d="M168 163 c-3-16 3-28 18-28 c10 0 17 3 21 2 c5-1 6-2 6-2 c1 6-2 12-10 13 l-22 -1 c-5 3-6 8-7 16z" fill="#4a3434"/>
 <path d="M177 162 q4-4 8 0M192 162 q4-4 8 0" fill="none" stroke="#5a3a36" stroke-width="1.2"/>
 <path d="M189 160 l-2.5 11 h5z" fill="#dca58a"/>
 <path d="M180 178 q8 9 17 0z" fill="#fff" stroke="#7a4a40" stroke-width="0.6"/>
 <!-- RIGHT MAN -->
 <path d="M281.5 270 h17 l-1 67 h-15z" fill="#4c362f"/>
 <path d="M297 270 h19 l1 67 h-18z" fill="#7b5e52"/>
 <path d="M280 333 h17 l1 10 h-32 l3-5z" fill="#3a2624"/>
 <path d="M298 333 h18 l0 10 h-22 l1-5z" fill="#3f2a27"/>
 <!-- jacket -->
 <path d="M286 191 h32 l8 5 c4 20 4 50 5 76 h-49 l1-69z" fill="#7a5d51"/>
 <path d="M296 191 h11 l-4 22z" fill="#fff"/>
 <path d="M300 192 l2.5 2.5 l-0.5 19 l-2 3 l-2-3 l-0.5-19z" fill="#a33040"/>
 <path d="M288 191 l8 0 l-1 30 l-9-6z" fill="#5e463c"/>
 <path d="M307 191 l8 1 l-6 26 l-5-3z" fill="#654b40"/>
 <path d="M322 197 c6 6 9 40 9 78 h-9 c-1-30-2-60-4-73z" fill="#7e6155"/>
 <path d="M319 277 c3-3 8-1 8 4 c0 4-2 6-4 6 c-3 0-4-4-4-6z" fill="#f3d0b8"/>
 <!-- arm to handshake -->
 <path d="M290 206 c-6 14 -13 22 -20 24 l-32 4 l0 10 l36-2 c12-2 18-12 22-24z" fill="#5a3e35"/>
 <!-- handshake hands -->
 <path d="M218 229 c6-4 12-4 18-3 l6 3 l-2 9 c-5 3-13 3-20 2z" fill="#f3d0b8"/>
 <path d="M232 228 c4 0 7 1 9 2 l0 7 c-3 1-6 2-9 1z" fill="#e8bea4"/>
 <!-- neck & head -->
 <path d="M292 182 h14 v11 l-7 3 l-7-3z" fill="#f1c4a9"/>
 <ellipse cx="316.5" cy="166" rx="3" ry="4" fill="#f3cdb5"/>
 <path d="M280 152 h35 v20 c0 12 -8 18 -17.5 18 s-17.5-6-17.5-18z" fill="#f6d2bd"/>
 <path d="M276.5 162 c-2-20 6-30 21-30 c15 0 23 10 21.5 30 l-3 6 l-2-14 l-33 -2 l-2 12z" fill="#a8621c"/>
 <circle cx="286" cy="162" r="1.6" fill="#5a3530"/><circle cx="300.5" cy="162" r="1.6" fill="#5a3530"/>
 <path d="M292.5 160 l-2.5 11 h5z" fill="#dca58a"/>
 <path d="M295 178 q5 4 10 -2" fill="none" stroke="#6a3a30" stroke-width="1.4" stroke-linecap="round"/>
 <!-- text -->
 <g font-family="Liberation Sans" font-weight="700" fill="#fff" text-anchor="end">
  <text x="753.5" y="186.8" font-size="30.5" textLength="252" lengthAdjust="spacing">Достигайте цели</text>
  <text x="753.5" y="218.6" font-size="30.5" textLength="154" lengthAdjust="spacing">благодаря</text>
  <text x="753.5" y="250.4" font-size="30.5" textLength="215.5" lengthAdjust="spacing">презентациям</text>
 </g>
 <path d="M600 221.3h153" stroke="#fff" stroke-width="1.4"/>
 <g transform="translate(674.5 397) skewX(-8)"><text x="0" y="0" font-family="Liberation Sans" font-weight="700" font-size="29" fill="#fff" stroke="#fff" stroke-width="0.7" textLength="85" lengthAdjust="spacingAndGlyphs">skill.im</text><rect x="40.6" y="-26.5" width="5.4" height="7" fill="#fff"/></g>
 <path d="M674 401h86" stroke="#fff" stroke-width="2.2"/>
</g>
</defs></svg>
<svg style="left:462px;top:174px" width="787" height="418" viewBox="0 0 786 418"><use href="#s5"/></svg>

<!-- thumbnails -->
<div class="a" style="left:26px;top:163px;width:378px;height:215px;border:1px solid #c8dde8"></div>
<svg style="left:27px;top:164px" width="376" height="213" viewBox="27 164 376 213">
 <rect x="27" y="164" width="376" height="213" fill="#4d4c4e"/>
 <rect x="27" y="164" width="376" height="7" fill="#03aff0"/>
 <rect x="27" y="370" width="376" height="7" fill="#03aff0"/>
 <circle cx="285.8" cy="270" r="94.4" fill="#fff"/>
 <g fill="#f2f2f2" font-family="Liberation Sans">
  <text x="43.5" y="250.2" font-size="13.5" font-weight="700" letter-spacing="0.25">Профессиональные</text>
  <text x="43.5" y="264.3" font-size="13.5" font-weight="700" letter-spacing="0.25">презентации</text>
  <text x="43.5" y="287.8" font-size="9.6" letter-spacing="0.12">Доносите свои послания</text>
  <text x="43.5" y="296.5" font-size="9.6" letter-spacing="0.12">эффективно</text>
  <text x="42" y="359.5" font-size="13.5" font-weight="700" font-style="italic" letter-spacing="-0.9">skill.im</text>
 </g>
 <path d="M42.5 362.3h40" stroke="#f2f2f2" stroke-width="1"/>
 <!-- easel -->
 <g fill="#3d5068" stroke="none">
  <rect x="216.4" y="217.8" width="93" height="4.4" rx="2.2"/>
  <circle cx="262.2" cy="217" r="1.6"/>
  <rect x="216.4" y="280.8" width="93" height="4.4" rx="2.2"/>
 </g>
 <path d="M244 285 L233.5 324 M262.2 285 V325.5 M280.4 285 L292.5 324" stroke="#3d5068" stroke-width="2" stroke-linecap="round"/>
 <path d="M222 229h34M222 232h36M222 235h30M222 238h35M222 241h32M222 244h20" stroke="#c8ccd2" stroke-width="0.9"/>
 <circle cx="269.2" cy="235.3" r="4.3" fill="none" stroke="#e8a04a" stroke-width="2.4"/>
 <path d="M269.2 231 A4.3 4.3 0 0 1 273.5 235.3" fill="none" stroke="#3a8ac0" stroke-width="2.4"/>
 <path d="M264.9 235.3 A4.3 4.3 0 0 0 269.2 239.6" fill="none" stroke="#3d5068" stroke-width="2.4"/>
 <path d="M264.5 243h9M264.5 246h9M264.5 249h9" stroke="#e8a04a" stroke-width="1"/>
 <path d="M264.5 246h9" stroke="#5ab8c8" stroke-width="1"/>
 <circle cx="289.4" cy="238" r="11.3" fill="#fff" stroke="#2f5a8a" stroke-width="1.6"/>
 <path d="M281 233 c3-4 7-4 9-2 l-1 4 c-2 0-3 2-5 2 c-2 2-2 4 0 6 l-3 1z M291 228 c3 0 7 2 8 6 l-3 1 c-1 3-3 3-5 1 c0-2 1-3 0-5z M289 242 c2-1 5 0 5 3 l-2 4 c-2 0-3-3-3-7z" fill="#2f5a8a"/>
 <path d="M222 255v20.5M230 255v20.5M238 255v20.5M246 255v20.5M254 255v20.5M222 262h36M222 269h36" stroke="#e4e4e4" stroke-width="0.6"/>
 <path d="M222.5 275.5 L228 257.5 L233 275.5z" fill="#8ed3da"/>
 <path d="M229 275.5 L236 254.5 L243 275.5z" fill="#d6313c"/>
 <path d="M238.5 275.5 L243 263 L248 275.5z" fill="#f0a644"/>
 <path d="M244 275.5 L250.5 259 L257.5 275.5z" fill="#3d5068"/>
 <g>
  <rect x="263.8" y="268.5" width="3.4" height="7" fill="#3d5068"/>
  <rect x="268.5" y="265.5" width="3.4" height="10" fill="#e0705a"/>
  <rect x="273.2" y="261.5" width="3.4" height="14" fill="#3d5068"/>
  <rect x="277.9" y="263.5" width="3.4" height="12" fill="#e0705a"/>
  <rect x="282.6" y="267.5" width="3.4" height="8" fill="#3d5068"/>
  <rect x="287.3" y="265.5" width="3.4" height="10" fill="#e0705a"/>
  <rect x="292" y="262.5" width="3.4" height="13" fill="#3d5068"/>
  <rect x="296.7" y="256" width="3.4" height="19.5" fill="#e0705a"/>
 </g>
 <!-- face -->
 <path d="M334 222 c0-7 4-10 10-10 s10 3 10 10 v6 c0 8-4 12-10 12 s-10-4-10-12z" fill="#f6d2bd"/>
 <path d="M333.5 227 c-1-10 4-13 10.5-13 s11.5 3 10.5 13 l-2-5 h-17z" fill="#9a5a30"/>
 <circle cx="339.5" cy="229" r="3" fill="none" stroke="#333" stroke-width="1.1"/>
 <circle cx="348.5" cy="229" r="3" fill="none" stroke="#333" stroke-width="1.1"/>
 <path d="M342.5 229h3M333 228.5h3.5M351.5 228.5h3.5" stroke="#333" stroke-width="1"/>
 <path d="M341 235.5h6c-1 2.5-5 2.5-6 0z" fill="#c0392b"/>
 <!-- IE -->
 <path d="M350.8 274.5 A8.6 8.6 0 1 1 351.3 268" fill="none" stroke="#2a8ae0" stroke-width="4.2"/>
 <path d="M335.5 268.6h17.5v3.6h-17.5z" fill="#2a8ae0"/>
 <path d="M338.5 261.5 C346 257 356 256 354.5 262.5 M333.5 274 C329.5 280 330 284 337 281" fill="none" stroke="#2a8ae0" stroke-width="2.2" stroke-linecap="round"/>
 <!-- play -->
 <circle cx="344.2" cy="313" r="11.5" fill="none" stroke="#d8403a" stroke-width="2.6"/>
 <path d="M340.8 307.5 v11 l9-5.5z" fill="#d8403a"/>
</svg>
<div class="a" style="left:24px;top:394px;width:382px;height:219px;border:3px solid #b7472a;background:#fff"></div>
<svg style="left:27.4px;top:403.6px" width="375.1" height="199.5" viewBox="0 0 786 418"><use href="#s5"/></svg>
<div class="a" style="left:26.5px;top:629px;width:377.5px;height:68px;border:1px solid #c8d2d8;border-bottom:none;background:#fff"></div>
<svg style="left:27px;top:630px" width="376" height="67" viewBox="27 630 376 67">
 <rect x="27" y="630.5" width="376" height="6.5" fill="#4ec0ee"/>
 <circle cx="284.8" cy="735.3" r="93.4" fill="#595959"/>
 <rect x="241.2" y="691.2" width="115.7" height="8" rx="1" fill="#ececec"/>
 <circle cx="342" cy="694.5" r="1" fill="#999"/><circle cx="346" cy="694.5" r="1" fill="#999"/><circle cx="350" cy="694.5" r="1" fill="#999"/>
 <circle cx="372.5" cy="659" r="16.8" fill="#fff" stroke="#505050" stroke-width="2.2"/>
 <g fill="#1a9a90">
  <g transform="translate(367 654) scale(1.15)"><circle r="4.6"/><g id="g6"><rect x="-1.3" y="-6.3" width="2.6" height="2.5"/></g><use href="#g6" transform="rotate(60)"/><use href="#g6" transform="rotate(120)"/><use href="#g6" transform="rotate(180)"/><use href="#g6" transform="rotate(240)"/><use href="#g6" transform="rotate(300)"/><circle r="1.8" fill="#fff"/></g>
  <g transform="translate(378.5 660) scale(1.15)"><circle r="3.7"/><use href="#g6" transform="scale(0.8)"/><use href="#g6" transform="rotate(60) scale(0.8)"/><use href="#g6" transform="rotate(120) scale(0.8)"/><use href="#g6" transform="rotate(180) scale(0.8)"/><use href="#g6" transform="rotate(240) scale(0.8)"/><use href="#g6" transform="rotate(300) scale(0.8)"/><circle r="1.5" fill="#fff"/></g>
  <g transform="translate(369 666) scale(1.1)"><circle r="3.2"/><use href="#g6" transform="scale(0.7)"/><use href="#g6" transform="rotate(60) scale(0.7)"/><use href="#g6" transform="rotate(120) scale(0.7)"/><use href="#g6" transform="rotate(180) scale(0.7)"/><use href="#g6" transform="rotate(240) scale(0.7)"/><use href="#g6" transform="rotate(300) scale(0.7)"/><circle r="1.2" fill="#fff"/></g>
 </g>
</svg>
<div class="t" style="left:12px;top:161.5px;font-size:15px;color:#444">4</div>
<div class="t" style="left:12px;top:395.5px;font-size:15px;color:#c0462a">5</div>
<div class="t" style="left:12px;top:627.5px;font-size:15px;color:#444">6</div>

<!-- scrollbars -->
<div class="a" style="left:426px;top:166px;width:13px;height:515px;background:#ebebeb"></div>
<div class="a" style="left:425px;top:151px;width:15px;height:15px;background:#fff;border:1px solid #ababab"></div>
<div class="a" style="left:425px;top:247px;width:15px;height:63px;background:#fff;border:1px solid #ababab"></div>
<div class="a" style="left:425px;top:680px;width:15px;height:15px;background:#fff;border:1px solid #ababab"></div>
<div class="a" style="left:1264px;top:166px;width:14px;height:384px;background:#ebebeb"></div>
<div class="a" style="left:1264px;top:151px;width:15px;height:15px;background:#fff;border:1px solid #ababab"></div>
<div class="a" style="left:1264px;top:247px;width:15px;height:20px;background:#fff;border:1px solid #ababab"></div>
<div class="a" style="left:1264px;top:549px;width:15px;height:15px;background:#fff;border:1px solid #ababab"></div>
<svg style="left:0;top:0" width="1280" height="720">
 <path d="M429 161h7l-3.5-4z" fill="#555"/>
 <path d="M429 685h7l-3.5 4z" fill="#555"/>
 <path d="M1268 161h7l-3.5-4z" fill="#555"/>
 <path d="M1268 555h7l-3.5 4z" fill="#555"/>
 <path d="M1268 572.5h7l-3.5-4zM1268 577h7l-3.5-4z" fill="#666"/>
 <path d="M1268 587h7l-3.5 4zM1268 591.5h7l-3.5 4z" fill="#666"/>
 <path d="M436 466.5 l5.5 -4.8 v2.8 h12.5 v-2.8 l5.5 4.8 l-5.5 4.8 v-2.8 h-12.5 v2.8z" fill="#000" opacity="0.18"/>
 <path d="M434.2 464.4 l5.5 -4.4 v2.8 h12 v-2.8 l5.5 4.4 l-5.5 4.4 v-2.8 h-12 v2.8z" fill="#fff" stroke="#111" stroke-width="1"/>
</svg>
<!-- ===== STATUS BAR ===== -->
<div class="a" style="left:0;top:697px;width:1280px;height:23px;background:#d24726;border-top:1px solid #c04a30;border-bottom:1px solid #d8735c"></div>
<div class="t" style="left:7px;top:702.7px;font-size:11px;color:#fff;letter-spacing:-0.11px">Слайд 5 из 19</div>
<div class="t" style="left:98px;top:702.7px;font-size:11px;color:#fff;letter-spacing:0.06px">"Тема Office"</div>
<div class="t" style="left:183px;top:702.7px;font-size:11px;color:#fff;letter-spacing:0.30px">русский</div>
<div class="a" style="left:925px;top:697px;width:38px;height:23px;background:#b53b1f"></div>
<div class="t" style="left:756px;top:702.7px;font-size:11px;color:#fff;letter-spacing:0.25px">Заметки</div>
<div class="t" style="left:837.5px;top:702.7px;font-size:11px;color:#fff;letter-spacing:0.50px">Примечания</div>
<div class="t" style="left:1218px;top:702.7px;font-size:11px;color:#fff;letter-spacing:-0.27px">62%</div>
<svg style="left:0;top:690px" width="1280" height="30">
 <g stroke="#fff" fill="none" stroke-width="1.1">
  <path d="M739.5 16.5h11.5M739.5 19.5h11.5M739.5 22.5h11.5M741.5 13.5h7.5"/>
 </g>
 <path d="M742 11.5h7l-3.5-4z" fill="#fff"/>
 <path d="M821 12.5h12.3v8.3h-6.3l-3.5 3v-3h-2.5z" fill="#fff"/>
 <rect x="937.3" y="11.8" width="13.7" height="11.8" fill="none" stroke="#fff" stroke-width="1.4"/>
 <rect x="939.8" y="14" width="8.5" height="5.5" fill="#fff"/>
 <path d="M939.5 21.5h9" stroke="#fff" stroke-width="1"/>
 <path d="M975 11.5h6v5.5h-6zM983 11.5h6v5.5h-6zM975 18.7h6v5.5h-6zM983 18.7h6v5.5h-6z" fill="#fff"/>
 <path d="M1013.2 11.5c2 -1 4.5-1 6.2 .5c1.7-1.5 4.2-1.5 6.2-.5v12c-2-1-4.5-1-6.2.5c-1.7-1.5-4.2-1.5-6.2-.5z" fill="none" stroke="#fff" stroke-width="1.1"/>
 <path d="M1019.4 12v12M1014.8 14h3M1014.8 16.5h3M1014.8 19h3M1021 14h3M1021 16.5h3M1021 19h3" stroke="#fff" stroke-width="0.9"/>
 <path d="M1051 12.5h12.5M1052.5 13v5.5h9.5v-5.5M1057.3 18.5v4.5M1054.5 23.5h5.6" fill="none" stroke="#fff" stroke-width="1.2"/>
 <path d="M1082 17.7h6" stroke="#fff" stroke-width="1.8"/>
 <path d="M1092 17.7h99.6" stroke="#fff" stroke-width="1"/>
 <path d="M1142.2 14v7.5" stroke="#fff" stroke-width="0.9"/>
 <rect x="1119.6" y="11.8" width="4.5" height="12" fill="#fff"/>
 <path d="M1195.7 17.7h8.4M1199.9 13.5v8.4" stroke="#fff" stroke-width="1.8"/>
 <rect x="1260.5" y="12.3" width="12.5" height="12" fill="none" stroke="#fff" stroke-width="1"/>
 <path d="M1266.75 13.5v3M1265.3 15l1.45-1.5 1.45 1.5M1266.75 23v-3M1265.3 21.5l1.45 1.5 1.45-1.5M1261.7 18.3h3M1263.2 16.8l-1.5 1.5 1.5 1.5M1271.8 18.3h-3M1270.3 16.8l1.5 1.5-1.5 1.5" fill="none" stroke="#fff" stroke-width="0.8"/>
</svg>
<div class="a" style="left:1238px;top:677px;width:27px;height:26.5px;background:rgba(41,41,41,0.78);box-shadow:0 0 0 0.5px rgba(255,255,255,0.5)"></div>
<svg style="left:1238px;top:677px" width="27" height="27">
 <g transform="translate(1.2 16.8) skewX(-6)"><text x="0" y="0" font-family="Liberation Sans" font-size="10" font-weight="700" fill="#f4f4f4" textLength="24" lengthAdjust="spacingAndGlyphs">skill.im</text></g>
 <path d="M1 17.8h25" stroke="#aaa" stroke-width="0.6"/>
</svg>

</body></html>
